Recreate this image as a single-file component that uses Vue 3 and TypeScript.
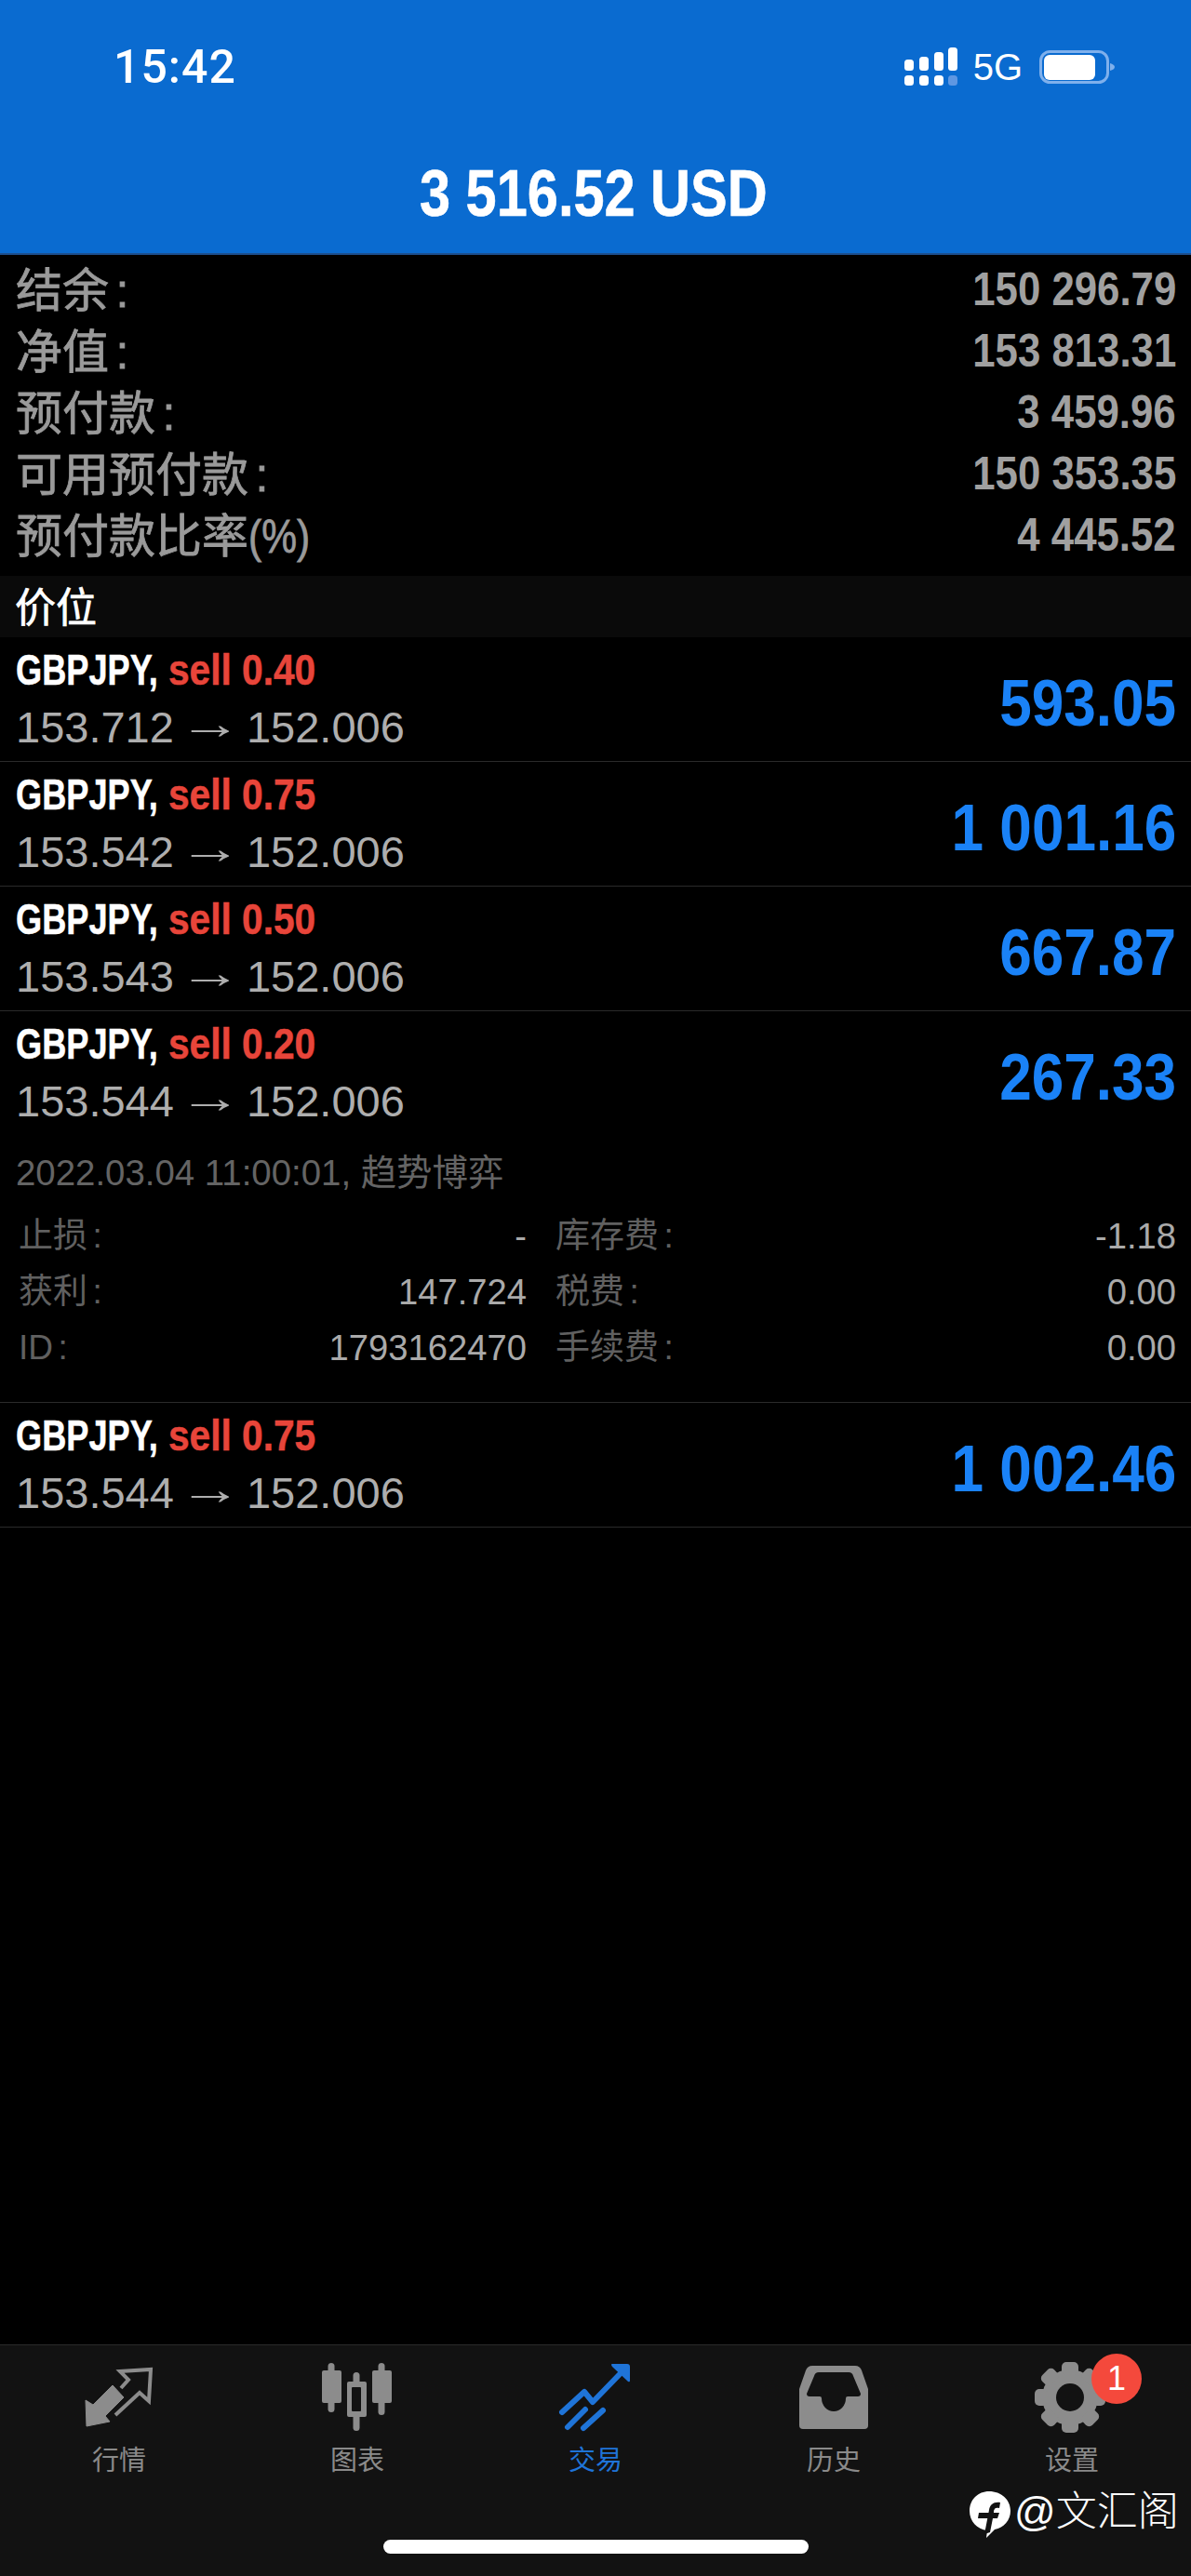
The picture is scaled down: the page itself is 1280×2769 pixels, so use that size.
<template>
  <div class="screen">
    <header class="top">
      <div class="status">
        <span class="time">15:42</span>
        <div class="status-right">
          <svg class="signal" width="58" height="42" viewBox="0 0 58 42">
            <rect x="0" y="13" width="10" height="12" rx="3.5" fill="#fff" />
            <rect x="16" y="10" width="10" height="15" rx="3.5" fill="#fff" />
            <rect x="32" y="5" width="10" height="20" rx="3.5" fill="#fff" />
            <rect x="47" y="0" width="10" height="25" rx="3.5" fill="#fff" />
            <rect x="0" y="30" width="10" height="11" rx="3.5" fill="#fff" />
            <rect x="16" y="30" width="10" height="11" rx="3.5" fill="#fff" />
            <rect x="32" y="30" width="10" height="11" rx="3.5" fill="#fff" />
            <rect x="47" y="30" width="10" height="11" rx="3.5" fill="#5f97e2" />
          </svg>
          <span class="net">5G</span>
          <svg class="battery" width="81" height="36" viewBox="0 0 81 36">
            <rect x="1.5" y="1.5" width="72" height="33" rx="10" fill="none" stroke="#7fb0ec" stroke-width="3" />
            <rect x="5" y="5" width="55" height="27" rx="6" fill="#fff" />
            <path d="M76 14c3 1 5 2 5 4s-2 3-5 4z" fill="#7fb0ec" />
          </svg>
        </div>
      </div>
      <div class="balance"><span>3 516.52 USD</span></div>
    </header>

    <section class="summary">
      <div class="sum-row" v-for="s in summary" :key="s.label">
        <span class="sum-label">{{ s.label }}<span v-if="s.pct" class="pct">(%)</span><i v-else class="colon">:</i></span>
        <span class="sum-value">{{ s.value }}</span>
      </div>
    </section>

    <div class="section-bar">价位</div>

    <section class="orders">
      <div class="order" v-for="o in orders" :key="o.id">
        <div class="order-main">
          <div class="order-left">
            <div class="order-title">
              <span class="symbol">GBPJPY,</span>
              <span class="side">sell {{ o.lots }}</span>
            </div>
            <div class="order-price">{{ o.open }}<span class="arrow">→</span>152.006</div>
          </div>
          <div class="profit">{{ o.profit }}</div>
        </div>
        <div class="order-detail" v-if="o.expanded">
          <div class="stamp">2022.03.04 11:00:01, 趋势博弈</div>
          <div class="detail-grid">
            <template v-for="d in details" :key="d.l1">
              <div class="cell">
                <span class="cell-label">{{ d.l1 }}<i class="colon">:</i></span>
                <span class="cell-value">{{ d.v1 }}</span>
              </div>
              <div class="cell">
                <span class="cell-label">{{ d.l2 }}<i class="colon">:</i></span>
                <span class="cell-value">{{ d.v2 }}</span>
              </div>
            </template>
          </div>
        </div>
      </div>
    </section>

    <div class="spacer"></div>

    <nav class="tabbar">
      <div class="tab">
        <svg class="icon" width="100" height="85" viewBox="-2 0 100 85">
          <path d="M12 45 13 73 38 68 33 62 53 42 41 29 20 50z" fill="#8c8c8c" stroke="#8c8c8c" stroke-width="1" stroke-linejoin="round" />
          <path d="M44 61 70 37 80 46 82 12 49 14 58 23 50 32" fill="none" stroke="#8c8c8c" stroke-width="4" stroke-linejoin="miter" />
        </svg>
        <span>行情</span>
      </div>
      <div class="tab">
        <svg class="icon" width="100" height="85" viewBox="1 0 100 85">
          <g fill="#8c8c8c">
            <rect x="19.5" y="5" width="7" height="53" rx="3.5" />
            <rect x="13" y="13" width="21" height="35" rx="2" />
            <rect x="73.5" y="5" width="7" height="56" rx="3.5" />
            <rect x="67" y="13" width="21" height="35" rx="2" />
            <rect x="46.5" y="15" width="7" height="63" rx="3.5" />
            <rect x="40" y="25" width="21" height="38" rx="2" />
          </g>
          <rect x="45" y="31" width="10" height="26" rx="1" fill="#121212" />
        </svg>
        <span>图表</span>
      </div>
      <div class="tab active">
        <svg class="icon" width="100" height="85" viewBox="0 0 100 85">
          <g fill="none" stroke="#1f74d8" stroke-width="6" stroke-linecap="round" stroke-linejoin="round">
            <path d="M14 58 38 36 47 47 79 14" />
            <path d="M20 74 39 55M37 75 58 56" />
          </g>
          <path d="M68 6H84Q87 6 87 9V24Q87 26 85 25L68 9Q66 6 68 6z" fill="#1f74d8" />
        </svg>
        <span>交易</span>
      </div>
      <div class="tab">
        <svg class="icon" width="100" height="85" viewBox="0 0 100 85">
          <path d="M27 8H73Q78 8 80 13L87 33V72Q87 76 83 76H17Q13 76 13 72V33L20 13Q22 8 27 8Z" fill="#8c8c8c" />
          <path d="M34 15H66Q70 15 71 19L79 38Q79 41 76 41H65Q63 41 63 43A13 14 0 0 1 37 43Q37 41 35 41H24Q21 41 21 38L29 19Q30 15 34 15Z" fill="#121212" />
        </svg>
        <span>历史</span>
      </div>
      <div class="tab">
        <svg class="icon" width="100" height="85" viewBox="0 0 100 85">
          <g transform="translate(48 42)" fill="#8c8c8c">
            <circle r="30" />
            <rect v-for="a in gearTeeth" :key="a" x="-9" y="-38" width="18" height="14" rx="5" :transform="`rotate(${a})`" />
            <circle r="15" fill="#121212" />
          </g>
        </svg>
        <span>设置</span>
        <b class="badge">1</b>
      </div>
    </nav>

    <div class="watermark">
      <svg class="wm-logo" width="46" height="52" viewBox="0 0 46 52">
        <path d="M22 1c13 0 23 9 23 21 0 10-7 18-17 20l-9 9 1-8C9 42 1 33 1 22 1 10 10 1 22 1z" fill="#fff" />
        <path d="M17 47l5-26c1-6 5-9 12-8l-1 6c-4-1-5 0-6 3l0 2h6l-2 6h-5l-3 15z" fill="#121212" />
        <path d="M11 24h18l-1 6H10z" fill="#121212" />
      </svg>
      <span>@文汇阁</span>
    </div>
    <div class="home"></div>
  </div>
</template>

<script setup lang="ts">
interface Order {
  id: number
  lots: string
  open: string
  profit: string
  expanded?: boolean
}

const summary = [
  { label: '结余', value: '150 296.79' },
  { label: '净值', value: '153 813.31' },
  { label: '预付款', value: '3 459.96' },
  { label: '可用预付款', value: '150 353.35' },
  { label: '预付款比率', value: '4 445.52', pct: true },
]

const orders: Order[] = [
  { id: 1, lots: '0.40', open: '153.712', profit: '593.05' },
  { id: 2, lots: '0.75', open: '153.542', profit: '1 001.16' },
  { id: 3, lots: '0.50', open: '153.543', profit: '667.87' },
  { id: 4, lots: '0.20', open: '153.544', profit: '267.33', expanded: true },
  { id: 5, lots: '0.75', open: '153.544', profit: '1 002.46' },
]

const details = [
  { l1: '止损', v1: '-', l2: '库存费', v2: '-1.18' },
  { l1: '获利', v1: '147.724', l2: '税费', v2: '0.00' },
  { l1: 'ID', v1: '1793162470', l2: '手续费', v2: '0.00' },
]

const gearTeeth = [0, 45, 90, 135, 180, 225, 270, 315]
</script>

<style>
html,
body {
  background: #000;
}
</style>

<style scoped>
.screen {
  position: relative;
  width: 1280px;
  height: 2769px;
  background: #000;
  display: flex;
  flex-direction: column;
  overflow: hidden;
  font-family: "Liberation Sans", "Noto Sans CJK SC", sans-serif;
}

.top {
  height: 272px;
  flex-shrink: 0;
  background: #0a6bd0;
  border-bottom: 2px solid #1d4f8f;
  color: #fff;
}

.status {
  display: flex;
  justify-content: space-between;
  align-items: center;
  padding: 50px 82px 0 122px;
  height: 44px;
}

.time {
  font-family: Roboto, sans-serif;
  font-weight: 500;
  font-size: 50px;
  letter-spacing: 1px;
}

.status-right {
  display: flex;
  align-items: center;
}

.signal {
  margin-right: 16px;
}

.net {
  font-size: 40px;
  margin-right: 18px;
}

.balance {
  margin-top: 76px;
  padding-right: 5px;
  text-align: center;
  font-weight: 700;
  font-size: 70px;
  line-height: 76px;
  -webkit-text-stroke: 0.6px #fff;
}

.balance span {
  display: inline-block;
  transform: scaleX(0.85);
}

.summary {
  padding: 1px 16px 14px 17px;
}

.sum-row {
  display: flex;
  justify-content: space-between;
  align-items: center;
  height: 66px;
  color: #9a9a9a;
}

.sum-label {
  font-size: 50px;
  -webkit-text-stroke: 0.8px #9a9a9a;
}

.colon {
  font-style: normal;
  margin-left: 0.15em;
}

.pct {
  display: inline-block;
  transform: scaleX(0.85);
  transform-origin: left center;
}

.sum-value {
  display: inline-block;
  padding-top: 6px;
  font-weight: 700;
  font-size: 50px;
  color: #a0a0a0;
  transform: scaleX(0.875);
  transform-origin: right center;
}

.section-bar {
  height: 66px;
  line-height: 70px;
  background: #0a0a0a;
  color: #fff;
  font-size: 44px;
  padding-left: 16px;
  -webkit-text-stroke: 0.7px #fff;
}

.order {
  border-bottom: 1px solid #2a2a2a;
}

.order-main {
  height: 133px;
  display: flex;
  justify-content: space-between;
  align-items: center;
  padding: 0 16px 0 17px;
}

.order-left {
  margin-top: -1px;
}

.order-title {
  display: flex;
  height: 58px;
  align-items: center;
  font-weight: 700;
  font-size: 47px;
}

.symbol {
  color: #fff;
  margin-right: -35px;
  transform: scaleX(0.77);
  transform-origin: left center;
  -webkit-text-stroke: 0.5px #fff;
}

.side {
  color: #e8453a;
  transform: scaleX(0.865);
  transform-origin: left center;
  -webkit-text-stroke: 0.5px #e8453a;
}

.order-price {
  margin-top: 4px;
  font-size: 47px;
  line-height: 60px;
  color: #aeaeae;
}

.arrow {
  display: inline-block;
  margin: 0 15.5px;
  line-height: 1;
  transform: translateY(-4px) scaleX(1.45);
}

.profit {
  padding-top: 8px;
  font-weight: 700;
  font-size: 71px;
  color: #1a82f7;
  transform: scaleX(0.875);
  transform-origin: right center;
}

.order-detail {
  padding: 11px 16px 28px 17px;
}

.stamp {
  font-size: 38.4px;
  line-height: 60px;
  color: #646464;
  margin-bottom: 8px;
}

.detail-grid {
  display: grid;
  grid-template-columns: 549px 1fr;
  column-gap: 28px;
}

.cell {
  display: flex;
  justify-content: space-between;
  height: 60px;
  line-height: 60px;
  font-size: 37px;
}

.cell-label {
  color: #606060;
  padding-left: 3px;
}

.cell-value {
  font-size: 38.2px;
  color: #aaa;
}

.spacer {
  flex: 1;
}

.tabbar {
  height: 249px;
  flex-shrink: 0;
  background: #121212;
  border-top: 1px solid #2a2a2a;
  display: grid;
  grid-template-columns: repeat(5, 1fr);
  padding-top: 14px;
  box-sizing: border-box;
}

.tab {
  position: relative;
  display: flex;
  flex-direction: column;
  align-items: center;
  font-size: 29px;
  color: #8a8a8a;
}

.tab span {
  margin-top: 8px;
  line-height: 34px;
}

.tab.active {
  color: #1f74d8;
}

.badge {
  position: absolute;
  left: 149px;
  top: -5px;
  width: 54px;
  height: 54px;
  border-radius: 50%;
  background: #f4493c;
  color: #fff;
  font-weight: 400;
  font-size: 36px;
  line-height: 54px;
  text-align: center;
}

.watermark {
  position: absolute;
  left: 1041px;
  top: 2664px;
  display: flex;
  align-items: flex-start;
  color: #fff;
  font-size: 44px;
  font-weight: 300;
  gap: 3px;
}

.wm-logo {
  margin-top: 13px;
}

.home {
  position: absolute;
  left: 412px;
  top: 2730px;
  width: 457px;
  height: 15px;
  border-radius: 8px;
  background: #fff;
}
</style>
